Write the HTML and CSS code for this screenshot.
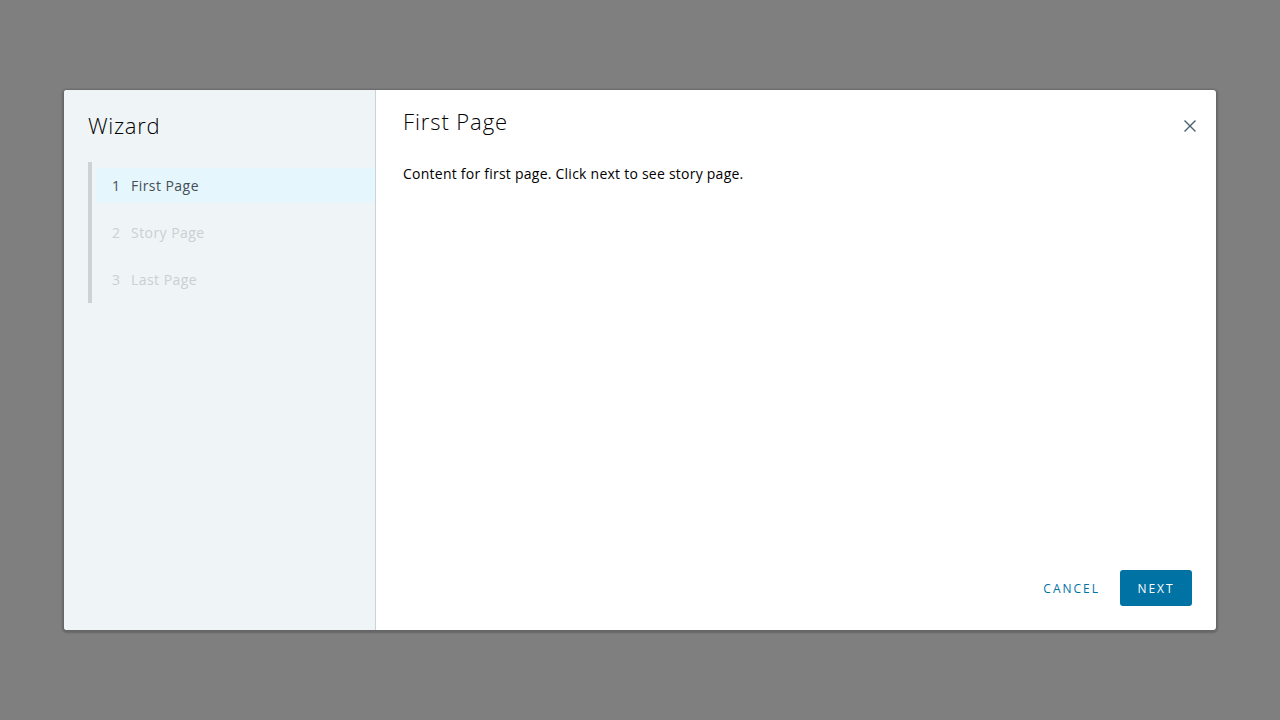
FILE: index.html
```html
<!DOCTYPE html>
<html lang="en">
<head>
<meta charset="utf-8">
<title>Wizard</title>
<link rel="stylesheet" href="styles.css">
</head>
<body>
<div class="backdrop">
  <div class="wizard">
    <nav class="stepnav">
      <h1 class="wizard-title">Wizard</h1>
      <ol class="steps">
        <li class="step active"><span class="num">1</span><span class="label">First Page</span></li>
        <li class="step"><span class="num">2</span><span class="label">Story Page</span></li>
        <li class="step"><span class="num">3</span><span class="label">Last Page</span></li>
      </ol>
    </nav>
    <section class="main">
      <header class="main-header">
        <h2 class="page-title">First Page</h2>
        <button class="close" aria-label="Close">
          <svg width="14" height="14" viewBox="0 0 14 14"><path d="M1.5 1.5 L12.5 12.5 M12.5 1.5 L1.5 12.5" stroke="#49606e" stroke-width="1.4" fill="none"/></svg>
        </button>
      </header>
      <div class="content">Content for first page. Click next to see story page.</div>
      <footer class="footer">
        <button class="btn btn-link">Cancel</button>
        <button class="btn btn-primary">Next</button>
      </footer>
    </section>
  </div>
</div>
</body>
</html>
```
FILE: styles.css
```css
* { box-sizing: border-box; }
html, body { margin: 0; padding: 0; height: 100%; }
body {
  font-family: "Open Sans", "Liberation Sans", sans-serif;
  background: #7f7f7f;
}
.backdrop {
  height: 100%;
  display: flex;
  align-items: center;
  justify-content: center;
}
.wizard {
  width: 1152px;
  height: 540px;
  background: #fff;
  border-radius: 3px;
  box-shadow: 0 1px 2px 2px rgba(0,0,0,0.2);
  display: flex;
  overflow: hidden;
}
.stepnav {
  width: 312px;
  flex: none;
  background: #eff4f7;
  border-right: 1px solid #ccd3d8;
  padding: 21px 0 0 24px;
}
.wizard-title {
  margin: 0;
  font-size: 22px;
  font-weight: 300;
  line-height: 28px;
  color: #000;
  letter-spacing: 0.7px;
}
.steps {
  list-style: none;
  margin: 23px 0 0;
  padding: 6px 0 6px 4px;
  border-left: 4px solid #ccd3d8;
  display: flex;
  flex-direction: column;
  gap: 12px;
}
.step {
  height: 35px;
  display: flex;
  align-items: center;
  padding-left: 16px;
  font-size: 14px;
  color: #c9d0d4;
  letter-spacing: 0.45px;
}
.step .num { width: 19px; }
.step.active {
  background: #e6f6fd;
  color: #454f56;
}
.main {
  flex: 1;
  display: flex;
  flex-direction: column;
  padding: 17px 19px 24px 27px;
}
.main-header {
  display: flex;
  justify-content: space-between;
  align-items: flex-start;
}
.page-title {
  margin: 0;
  font-size: 22px;
  font-weight: 300;
  line-height: 28px;
  color: #000;
  letter-spacing: 0.9px;
}
.close {
  border: 0;
  background: none;
  padding: 0;
  margin: 12px 0 0 0;
  width: 14px;
  height: 14px;
  cursor: pointer;
}
.close svg { display: block; }
.content {
  margin-top: 29px;
  font-size: 14px;
  line-height: 20px;
  color: #000;
  letter-spacing: 0.24px;
  flex: 1;
}
.footer {
  display: flex;
  justify-content: flex-end;
  gap: 8px;
  margin-right: 5px;
}
.btn {
  height: 36px;
  border-radius: 3px;
  font-family: inherit;
  font-size: 12px;
  font-weight: 500;
  letter-spacing: 2px;
  text-transform: uppercase;
  border: 0;
  padding: 0 12px;
}
.btn-link {
  background: none;
  color: #0072a3;
}
.btn-primary {
  background: #0072a3;
  color: #fff;
  width: 72px;
}
```
